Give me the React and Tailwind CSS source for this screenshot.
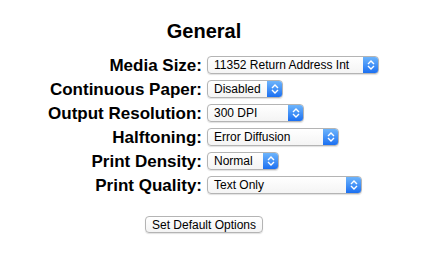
import React from "react";

const rows = [
  { label: "Media Size:", value: "11352 Return Address Int", w: "w-[172px]" },
  { label: "Continuous Paper:", value: "Disabled", w: "w-[76px]" },
  { label: "Output Resolution:", value: "300 DPI", w: "w-[97px]" },
  { label: "Halftoning:", value: "Error Diffusion", w: "w-[132px]" },
  { label: "Print Density:", value: "Normal", w: "w-[72px]" },
  { label: "Print Quality:", value: "Text Only", w: "w-[155px]" },
];

function Chevrons() {
  return (
    <svg width="8" height="12" viewBox="0 0 8 12" fill="none">
      <path d="M1.5 4.5 L4 2 L6.5 4.5" stroke="white" strokeWidth="1.4" strokeLinecap="square" />
      <path d="M1.5 7.5 L4 10 L6.5 7.5" stroke="white" strokeWidth="1.4" strokeLinecap="square" />
    </svg>
  );
}

function Select({ value, w }) {
  return (
    <div
      className={`${w} h-[18px] flex items-stretch rounded-[4px] border border-[#b4b4b4] bg-gradient-to-b from-white to-[#f4f4f4] shadow-[0_1px_1px_rgba(0,0,0,0.12)] overflow-hidden`}
    >
      <div className="flex-1 flex items-center pl-[6px] text-[12px] leading-none text-black whitespace-nowrap overflow-hidden">
        {value}
      </div>
      <div className="w-[15px] flex items-center justify-center bg-gradient-to-b from-[#6db4fb] to-[#1a6ff1]">
        <Chevrons />
      </div>
    </div>
  );
}

export default function App() {
  return (
    <div
      className="w-[425px] h-[258px] bg-white text-black"
      style={{ fontFamily: '"Liberation Sans", Arial, sans-serif' }}
    >
      <div className="w-[408px] flex flex-col items-center pt-[19px]">
        <div className="text-[20px] leading-[24px] font-bold">General</div>
        <div className="mt-[10px] self-start grid grid-cols-[202px_auto] gap-x-[5px]">
          {rows.map((r) => (
            <React.Fragment key={r.label}>
              <div className="h-6 flex items-center justify-end text-[17px] font-bold leading-none whitespace-nowrap">
                {r.label}
              </div>
              <div className="h-6 flex items-center">
                <Select value={r.value} w={r.w} />
              </div>
            </React.Fragment>
          ))}
        </div>
        <button className="mt-[19px] w-[118px] h-[17px] rounded-[4px] border border-[#b4b4b4] bg-gradient-to-b from-white to-[#f3f3f3] shadow-[0_1px_1px_rgba(0,0,0,0.12)] text-[12px] leading-none text-black flex items-center justify-center">
          Set Default Options
        </button>
      </div>
    </div>
  );
}
